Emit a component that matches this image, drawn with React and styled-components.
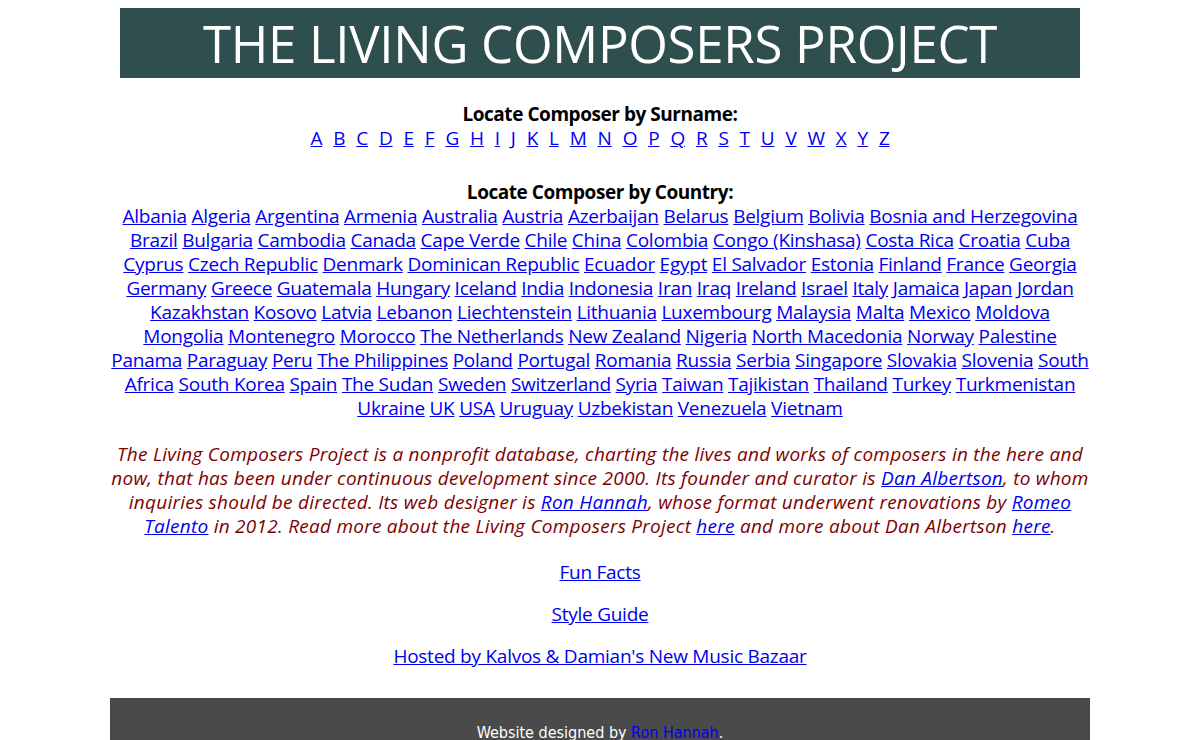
import React from "react";
import styled, { createGlobalStyle } from "styled-components";

const GlobalStyle = createGlobalStyle`
  body {
    margin: 8px;
    background: #ffffff;
    font-family: "Open Sans", "Noto Sans", sans-serif;
  }
`;

const letters = "ABCDEFGHIJKLMNOPQRSTUVWXYZ".split("");

const countries = [
  "Albania", "Algeria", "Argentina", "Armenia", "Australia", "Austria", "Azerbaijan",
  "Belarus", "Belgium", "Bolivia", "Bosnia and Herzegovina", "Brazil", "Bulgaria",
  "Cambodia", "Canada", "Cape Verde", "Chile", "China", "Colombia", "Congo (Kinshasa)",
  "Costa Rica", "Croatia", "Cuba", "Cyprus", "Czech Republic", "Denmark",
  "Dominican Republic", "Ecuador", "Egypt", "El Salvador", "Estonia", "Finland",
  "France", "Georgia", "Germany", "Greece", "Guatemala", "Hungary", "Iceland", "India",
  "Indonesia", "Iran", "Iraq", "Ireland", "Israel", "Italy", "Jamaica", "Japan",
  "Jordan", "Kazakhstan", "Kosovo", "Latvia", "Lebanon", "Liechtenstein", "Lithuania",
  "Luxembourg", "Malaysia", "Malta", "Mexico", "Moldova", "Mongolia", "Montenegro",
  "Morocco", "The Netherlands", "New Zealand", "Nigeria", "North Macedonia", "Norway",
  "Palestine", "Panama", "Paraguay", "Peru", "The Philippines", "Poland", "Portugal",
  "Romania", "Russia", "Serbia", "Singapore", "Slovakia", "Slovenia", "South Africa",
  "South Korea", "Spain", "The Sudan", "Sweden", "Switzerland", "Syria", "Taiwan",
  "Tajikistan", "Thailand", "Turkey", "Turkmenistan", "Ukraine", "UK", "USA",
  "Uruguay", "Uzbekistan", "Venezuela", "Vietnam",
];

export default function App() {
  return (
    <>
      <GlobalStyle />
      <Page>
        <Banner>THE LIVING COMPOSERS PROJECT</Banner>

        <Section>
          <Heading>Locate Composer by Surname:</Heading>
          <LetterRow>
            {letters.map((l) => (
              <Link key={l} href="#">{l}</Link>
            ))}
          </LetterRow>
        </Section>

        <Section $top={30}>
          <Heading>Locate Composer by Country:</Heading>
          <CountryList>
            {countries.map((c, i) => (
              <React.Fragment key={c}>
                <Link href="#">{c}</Link>
                {i < countries.length - 1 ? " " : ""}
              </React.Fragment>
            ))}
          </CountryList>
        </Section>

        <About>
          The Living Composers Project is a nonprofit database, charting the lives and
          works of composers in the here and now, that has been under continuous
          development since 2000. Its founder and curator is{" "}
          <Link href="#">Dan Albertson</Link>, to whom inquiries should be directed. Its
          web designer is <Link href="#">Ron Hannah</Link>, whose format underwent
          renovations by <Link href="#">Romeo Talento</Link> in 2012. Read more about the
          Living Composers Project <Link href="#">here</Link> and more about Dan
          Albertson <Link href="#">here</Link>.
        </About>

        <NavLine><Link href="#">Fun Facts</Link></NavLine>
        <NavLine><Link href="#">Style Guide</Link></NavLine>
        <NavLine><Link href="#">Hosted by Kalvos &amp; Damian's New Music Bazaar</Link></NavLine>

        <Footer>
          Website designed by <FooterLink href="#">Ron Hannah</FooterLink>.
        </Footer>
      </Page>
    </>
  );
}

const Page = styled.div`
  width: 980px;
  margin: 0 auto;
  display: flex;
  flex-direction: column;
  align-items: stretch;
  text-align: center;
  font-size: 19px;
  line-height: 24px;
  letter-spacing: -0.25px;
  color: #000;
`;

const Banner = styled.h1`
  margin: 0 10px;
  height: 70px;
  background: #2f4f4f;
  color: #ffffff;
  font-weight: 400;
  font-size: 51px;
  line-height: 70px;
  letter-spacing: -0.3px;
`;

const Section = styled.div`
  margin-top: ${({ $top }) => $top || 24}px;
`;

const Heading = styled.div`
  font-weight: 700;
  letter-spacing: -0.45px;
`;

const LetterRow = styled.div`
  display: flex;
  justify-content: center;
  gap: 11px;
`;

const Link = styled.a`
  color: #0000ee;
  text-decoration: underline;
`;

const CountryList = styled.div`
  padding: 0 0;
`;

const About = styled.p`
  margin: 22px 0 22px;
  font-style: italic;
  letter-spacing: 0.25px;
  color: #800000;
`;

const NavLine = styled.p`
  margin: 0 0 18px;
`;

const Footer = styled.footer`
  margin-top: 12px;
  background: #4a4a4a;
  color: #ffffff;
  padding: 24px 0 30px;
  font-family: "Liberation Sans Narrow", "DejaVu Sans Condensed", sans-serif;
  font-size: 16px;
  line-height: 22px;
  letter-spacing: 0;
`;

const FooterLink = styled.a`
  color: #0000ee;
  text-decoration: none;
`;
